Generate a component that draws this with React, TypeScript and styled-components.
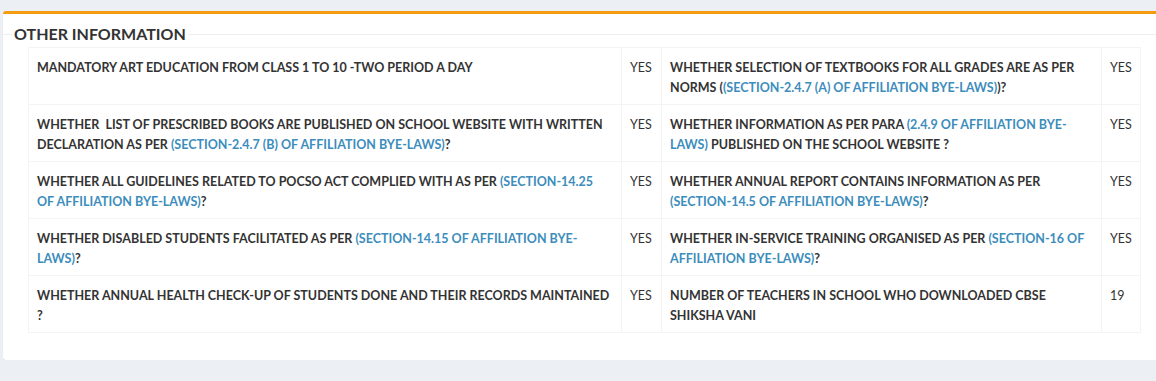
import styled, { createGlobalStyle } from 'styled-components';

const GlobalStyle = createGlobalStyle`
    html, body {
        margin: 0;
        padding: 0;
        background: #ecf0f5;
        overflow: hidden;
    }
    body {
        padding: 11px 0 0 3px;
        font-family: 'Lato', 'Open Sans', sans-serif;
        color: #333;
    }
`;

const StyledBox = styled.div`
    width: 1165px;
    background: #fff;
    border-top: 3px solid #f39c12;
    border-radius: 3px;
    box-shadow: 0 1px 1px rgba(0, 0, 0, 0.1);
    padding-bottom: 27px;
`;

const StyledFieldset = styled.fieldset`
    margin: 9px 0 0 0;
    padding: 0 25px 0 9px;
    border: none;
    border-top: 1px solid #eee;
`;

const StyledLegend = styled.legend`
    padding: 0 2px;
    font-size: 16px;
    font-weight: 700;
    color: #333;
    line-height: 22px;
`;

const StyledTable = styled.table`
    width: 1112px;
    margin: 2px 0 0 16px;
    border-collapse: collapse;
    table-layout: fixed;
    font-size: 12.5px;
`;

const StyledCell = styled.td<{ $bold?: boolean; $width: number }>`
    box-sizing: border-box;
    width: ${p => p.$width}px;
    border: 1px solid #f4f4f4;
    padding: 10px ${p => (p.$bold ? 10 : 8)}px 6px 8px;
    line-height: 20px;
    vertical-align: top;
    font-weight: ${p => (p.$bold ? 700 : 400)};
    color: #333;
    height: 57px;
`;

const StyledLink = styled.span`
    color: #3c8dbc;
`;

type Item = { q: React.ReactNode; a: string };

const rows: [Item, Item][] = [
    [
        { q: 'MANDATORY ART EDUCATION FROM CLASS 1 TO 10 -TWO PERIOD A DAY', a: 'YES' },
        {
            q: <>WHETHER SELECTION OF TEXTBOOKS FOR ALL GRADES ARE AS PER NORMS (<StyledLink>(SECTION-2.4.7 (A) OF AFFILIATION BYE-LAWS)</StyledLink>)?</>,
            a: 'YES',
        },
    ],
    [
        {
            q: <>WHETHER&nbsp; LIST OF PRESCRIBED BOOKS ARE PUBLISHED ON SCHOOL WEBSITE WITH WRITTEN DECLARATION AS PER <StyledLink>(SECTION-2.4.7 (B) OF AFFILIATION BYE-LAWS)</StyledLink>?</>,
            a: 'YES',
        },
        {
            q: <>WHETHER INFORMATION AS PER PARA <StyledLink>(2.4.9 OF AFFILIATION BYE-LAWS)</StyledLink> PUBLISHED ON THE SCHOOL WEBSITE ?</>,
            a: 'YES',
        },
    ],
    [
        {
            q: <>WHETHER ALL GUIDELINES RELATED TO POCSO ACT COMPLIED WITH AS PER <StyledLink>(SECTION-14.25 OF AFFILIATION BYE-LAWS)</StyledLink>?</>,
            a: 'YES',
        },
        {
            q: <>WHETHER ANNUAL REPORT CONTAINS INFORMATION AS PER <StyledLink>(SECTION-14.5 OF AFFILIATION BYE-LAWS)</StyledLink>?</>,
            a: 'YES',
        },
    ],
    [
        {
            q: <>WHETHER DISABLED STUDENTS FACILITATED AS PER <StyledLink>(SECTION-14.15 OF AFFILIATION BYE-LAWS)</StyledLink>?</>,
            a: 'YES',
        },
        {
            q: <>WHETHER IN-SERVICE TRAINING ORGANISED AS PER <StyledLink>(SECTION-16 OF AFFILIATION BYE-LAWS)</StyledLink>?</>,
            a: 'YES',
        },
    ],
    [
        { q: 'WHETHER ANNUAL HEALTH CHECK-UP OF STUDENTS DONE AND THEIR RECORDS MAINTAINED ?', a: 'YES' },
        { q: 'NUMBER OF TEACHERS IN SCHOOL WHO DOWNLOADED CBSE SHIKSHA VANI', a: '19' },
    ],
];

export default function App() {
    return (
        <>
            <GlobalStyle />
            <StyledBox>
                <StyledFieldset>
                    <StyledLegend>OTHER INFORMATION</StyledLegend>
                    <StyledTable>
                        <tbody>
                            {rows.map((row, i) => (
                                <tr key={i}>
                                    <StyledCell $bold $width={593}>{row[0].q}</StyledCell>
                                    <StyledCell $width={40}>{row[0].a}</StyledCell>
                                    <StyledCell $bold $width={440}>{row[1].q}</StyledCell>
                                    <StyledCell $width={39}>{row[1].a}</StyledCell>
                                </tr>
                            ))}
                        </tbody>
                    </StyledTable>
                </StyledFieldset>
            </StyledBox>
        </>
    );
}
